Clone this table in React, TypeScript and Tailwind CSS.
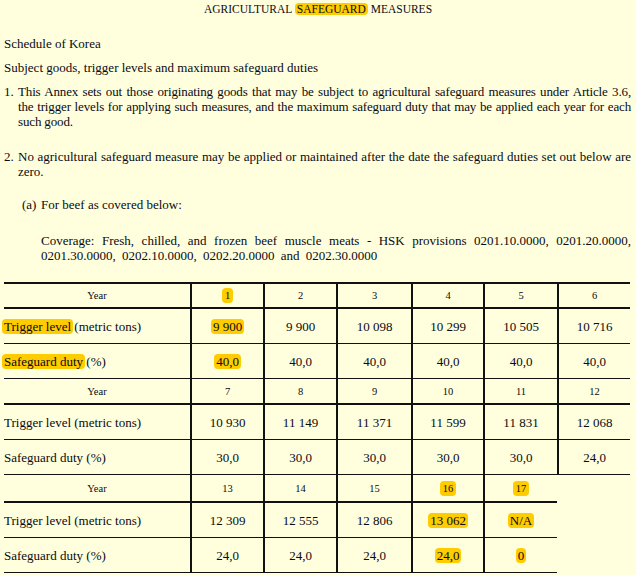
import React from "react";

const cols = "grid grid-cols-[186px_73px_73px_75px_72px_74px_73px]";
const fullLine = "block text-justify [text-align-last:justify]";

function Mark({ children, year }: { children: React.ReactNode; year?: boolean }) {
  return (
    <span className={year ? "rounded-[4px] bg-[#ffcc00] px-[3px]" : "rounded-[4px] bg-[#ffcc00] px-[2px]"}>
      {children}
    </span>
  );
}

type Cell = { v: string; hl?: boolean } | null;

interface Group {
  yearH: string;
  years: Cell[];
  trigger: Cell[];
  duty: Cell[];
  hlLabels?: boolean;
}

const groups: Group[] = [
  {
    yearH: "h-[25px]",
    hlLabels: true,
    years: [{ v: "1", hl: true }, { v: "2" }, { v: "3" }, { v: "4" }, { v: "5" }, { v: "6" }],
    trigger: [{ v: "9 900", hl: true }, { v: "9 900" }, { v: "10 098" }, { v: "10 299" }, { v: "10 505" }, { v: "10 716" }],
    duty: [{ v: "40,0", hl: true }, { v: "40,0" }, { v: "40,0" }, { v: "40,0" }, { v: "40,0" }, { v: "40,0" }],
  },
  {
    yearH: "h-[26px]",
    years: [{ v: "7" }, { v: "8" }, { v: "9" }, { v: "10" }, { v: "11" }, { v: "12" }],
    trigger: [{ v: "10 930" }, { v: "11 149" }, { v: "11 371" }, { v: "11 599" }, { v: "11 831" }, { v: "12 068" }],
    duty: [{ v: "30,0" }, { v: "30,0" }, { v: "30,0" }, { v: "30,0" }, { v: "30,0" }, { v: "24,0" }],
  },
  {
    yearH: "h-[28px]",
    years: [{ v: "13" }, { v: "14" }, { v: "15" }, { v: "16", hl: true }, { v: "17", hl: true }, null],
    trigger: [{ v: "12 309" }, { v: "12 555" }, { v: "12 806" }, { v: "13 062", hl: true }, { v: "N/A", hl: true }, null],
    duty: [{ v: "24,0" }, { v: "24,0" }, { v: "24,0" }, { v: "24,0", hl: true }, { v: "0", hl: true }, null],
  },
];

function Row({
  label,
  cells,
  h,
  bottom,
  small,
}: {
  label: React.ReactNode;
  cells: Cell[];
  h: string;
  bottom: "thick" | "thin";
  small?: boolean;
}) {
  const b = bottom === "thick" ? "border-b-2" : "border-b";
  return (
    <>
      <div
        className={`${h} ${b} flex items-center border-[#111] ${
          small ? "justify-center text-[10.5px]" : "justify-start"
        }`}
      >
        {label}
      </div>
      {cells.map((c, i) =>
        c === null ? (
          <div key={i} className={h} />
        ) : (
          <div
            key={i}
            className={`${h} ${b} flex items-center justify-center border-l-2 border-[#111] ${
              small ? "text-[10.5px]" : ""
            }`}
          >
            {c.hl ? <Mark year={small}>{c.v}</Mark> : c.v}
          </div>
        ),
      )}
    </>
  );
}

export default function App() {
  return (
    <div className="min-h-[575px] w-[636px] bg-[#ffffdd] [font-family:'Liberation_Serif',serif] text-[13px] leading-[15px] text-[#0a0a14]">
      <div className="pt-[2px] text-center text-[11.5px] leading-[15px]">
        AGRICULTURAL <Mark>SAFEGUARD</Mark> MEASURES
      </div>

      <p className="mt-[19px] px-[4px]">Schedule of Korea</p>
      <p className="mt-[9px] px-[4px]">Subject goods, trigger levels and maximum safeguard duties</p>

      <div className="mt-[9px] flex pl-[4px] pr-[5px]">
        <span className="w-[14px] shrink-0">1.</span>
        <p className="flex-1 tracking-[-0.15px]">
          <span className={fullLine}>
            This Annex sets out those originating goods that may be subject to agricultural safeguard measures under
            Article 3.6,
          </span>
          <span className={fullLine}>
            the trigger levels for applying such measures, and the maximum safeguard duty that may be applied each year
            for each
          </span>
          <span className="block">such good.</span>
        </p>
      </div>

      <div className="mt-[20px] flex pl-[4px] pr-[5px]">
        <span className="w-[14px] shrink-0">2.</span>
        <p className="flex-1">
          <span className={fullLine}>
            No agricultural safeguard measure may be applied or maintained after the date the safeguard duties set out
            below are
          </span>
          <span className="block">zero.</span>
        </p>
      </div>

      <div className="mt-[18px] flex pl-[22px] pr-[5px]">
        <span className="w-[19px] shrink-0">(a)</span>
        <p>For beef as covered below:</p>
      </div>

      <p className="mt-[21px] pl-[41px] pr-[5px]">
        <span className={fullLine}>
          Coverage: Fresh, chilled, and frozen beef muscle meats - HSK provisions 0201.10.0000, 0201.20.0000,
        </span>
        <span className="block [word-spacing:3px]">0201.30.0000, 0202.10.0000, 0202.20.0000 and 0202.30.0000</span>
      </p>

      <div className={`${cols} ml-[4px] mt-[19px] w-[626px] border-t-2 border-[#111]`}>
        {groups.map((g, gi) => (
          <React.Fragment key={gi}>
            <Row label="Year" cells={g.years} h={g.yearH} bottom="thick" small />
            <Row
              label={
                g.hlLabels ? (
                  <span>
                    <span className="-mx-[2px] rounded-[4px] bg-[#ffcc00] px-[2px]">Trigger level</span> (metric tons)
                  </span>
                ) : (
                  "Trigger level (metric tons)"
                )
              }
              cells={g.trigger}
              h="h-[35px]"
              bottom="thin"
            />
            <Row
              label={
                g.hlLabels ? (
                  <span>
                    <span className="-mx-[2px] rounded-[4px] bg-[#ffcc00] px-[2px]">Safeguard duty</span> (%)
                  </span>
                ) : (
                  "Safeguard duty (%)"
                )
              }
              cells={g.duty}
              h="h-[35px]"
              bottom="thin"
            />
          </React.Fragment>
        ))}
      </div>
    </div>
  );
}
